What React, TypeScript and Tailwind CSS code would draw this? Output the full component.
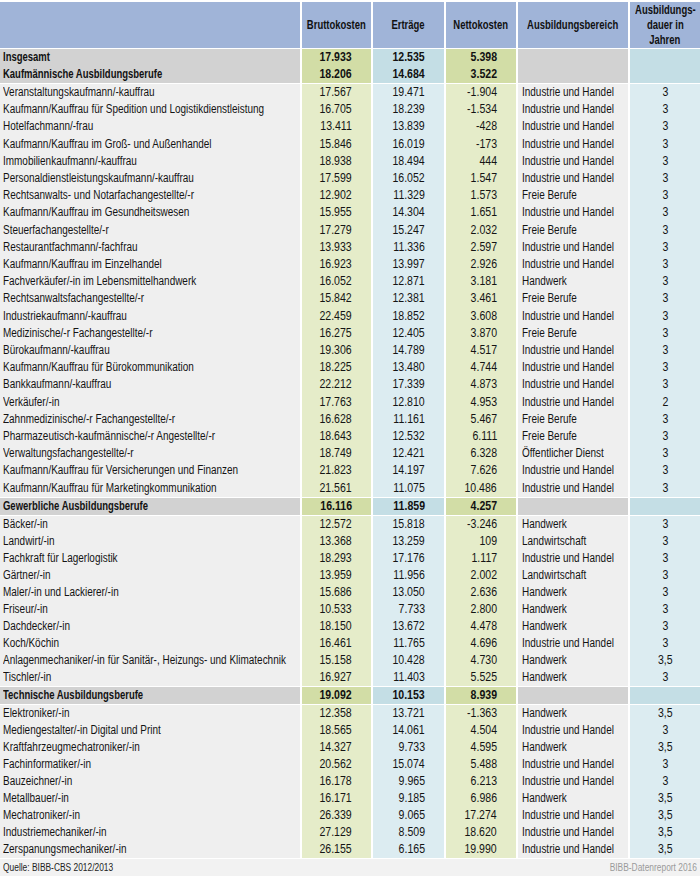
import React from "react";

type Row = { n: string; b: string; e: string; k: string; a?: string; d?: string; s?: boolean };
const I = "Industrie und Handel";
const F = "Freie Berufe";
const H = "Handwerk";
const L = "Landwirtschaft";

const rows: Row[] = [
  { n: "Insgesamt", b: "17.933", e: "12.535", k: "5.398", s: true },
  { n: "Kaufmännische Ausbildungsberufe", b: "18.206", e: "14.684", k: "3.522", s: true },
  { n: "Veranstaltungskaufmann/-kauffrau", b: "17.567", e: "19.471", k: "-1.904", a: I, d: "3" },
  { n: "Kaufmann/Kauffrau für Spedition und Logistikdienstleistung", b: "16.705", e: "18.239", k: "-1.534", a: I, d: "3" },
  { n: "Hotelfachmann/-frau", b: "13.411", e: "13.839", k: "-428", a: I, d: "3" },
  { n: "Kaufmann/Kauffrau im Groß- und Außenhandel", b: "15.846", e: "16.019", k: "-173", a: I, d: "3" },
  { n: "Immobilienkaufmann/-kauffrau", b: "18.938", e: "18.494", k: "444", a: I, d: "3" },
  { n: "Personaldienstleistungskaufmann/-kauffrau", b: "17.599", e: "16.052", k: "1.547", a: I, d: "3" },
  { n: "Rechtsanwalts- und Notarfachangestellte/-r", b: "12.902", e: "11.329", k: "1.573", a: F, d: "3" },
  { n: "Kaufmann/Kauffrau im Gesundheitswesen", b: "15.955", e: "14.304", k: "1.651", a: I, d: "3" },
  { n: "Steuerfachangestellte/-r", b: "17.279", e: "15.247", k: "2.032", a: F, d: "3" },
  { n: "Restaurantfachmann/-fachfrau", b: "13.933", e: "11.336", k: "2.597", a: I, d: "3" },
  { n: "Kaufmann/Kauffrau im Einzelhandel", b: "16.923", e: "13.997", k: "2.926", a: I, d: "3" },
  { n: "Fachverkäufer/-in im Lebensmittelhandwerk", b: "16.052", e: "12.871", k: "3.181", a: H, d: "3" },
  { n: "Rechtsanwaltsfachangestellte/-r", b: "15.842", e: "12.381", k: "3.461", a: F, d: "3" },
  { n: "Industriekaufmann/-kauffrau", b: "22.459", e: "18.852", k: "3.608", a: I, d: "3" },
  { n: "Medizinische/-r Fachangestellte/-r", b: "16.275", e: "12.405", k: "3.870", a: F, d: "3" },
  { n: "Bürokaufmann/-kauffrau", b: "19.306", e: "14.789", k: "4.517", a: I, d: "3" },
  { n: "Kaufmann/Kauffrau für Bürokommunikation", b: "18.225", e: "13.480", k: "4.744", a: I, d: "3" },
  { n: "Bankkaufmann/-kauffrau", b: "22.212", e: "17.339", k: "4.873", a: I, d: "3" },
  { n: "Verkäufer/-in", b: "17.763", e: "12.810", k: "4.953", a: I, d: "2" },
  { n: "Zahnmedizinische/-r Fachangestellte/-r", b: "16.628", e: "11.161", k: "5.467", a: F, d: "3" },
  { n: "Pharmazeutisch-kaufmännische/-r Angestellte/-r", b: "18.643", e: "12.532", k: "6.111", a: F, d: "3" },
  { n: "Verwaltungsfachangestellte/-r", b: "18.749", e: "12.421", k: "6.328", a: "Öffentlicher Dienst", d: "3" },
  { n: "Kaufmann/Kauffrau für Versicherungen und Finanzen", b: "21.823", e: "14.197", k: "7.626", a: I, d: "3" },
  { n: "Kaufmann/Kauffrau für Marketingkommunikation", b: "21.561", e: "11.075", k: "10.486", a: I, d: "3" },
  { n: "Gewerbliche Ausbildungsberufe", b: "16.116", e: "11.859", k: "4.257", s: true },
  { n: "Bäcker/-in", b: "12.572", e: "15.818", k: "-3.246", a: H, d: "3" },
  { n: "Landwirt/-in", b: "13.368", e: "13.259", k: "109", a: L, d: "3" },
  { n: "Fachkraft für Lagerlogistik", b: "18.293", e: "17.176", k: "1.117", a: I, d: "3" },
  { n: "Gärtner/-in", b: "13.959", e: "11.956", k: "2.002", a: L, d: "3" },
  { n: "Maler/-in und Lackierer/-in", b: "15.686", e: "13.050", k: "2.636", a: H, d: "3" },
  { n: "Friseur/-in", b: "10.533", e: "7.733", k: "2.800", a: H, d: "3" },
  { n: "Dachdecker/-in", b: "18.150", e: "13.672", k: "4.478", a: H, d: "3" },
  { n: "Koch/Köchin", b: "16.461", e: "11.765", k: "4.696", a: I, d: "3" },
  { n: "Anlagenmechaniker/-in für Sanitär-, Heizungs- und Klimatechnik", b: "15.158", e: "10.428", k: "4.730", a: H, d: "3,5" },
  { n: "Tischler/-in", b: "16.927", e: "11.403", k: "5.525", a: H, d: "3" },
  { n: "Technische Ausbildungsberufe", b: "19.092", e: "10.153", k: "8.939", s: true },
  { n: "Elektroniker/-in", b: "12.358", e: "13.721", k: "-1.363", a: H, d: "3,5" },
  { n: "Mediengestalter/-in Digital und Print", b: "18.565", e: "14.061", k: "4.504", a: I, d: "3" },
  { n: "Kraftfahrzeugmechatroniker/-in", b: "14.327", e: "9.733", k: "4.595", a: H, d: "3,5" },
  { n: "Fachinformatiker/-in", b: "20.562", e: "15.074", k: "5.488", a: I, d: "3" },
  { n: "Bauzeichner/-in", b: "16.178", e: "9.965", k: "6.213", a: I, d: "3" },
  { n: "Metallbauer/-in", b: "16.171", e: "9.185", k: "6.986", a: H, d: "3,5" },
  { n: "Mechatroniker/-in", b: "26.339", e: "9.065", k: "17.274", a: I, d: "3,5" },
  { n: "Industriemechaniker/-in", b: "27.129", e: "8.509", k: "18.620", a: I, d: "3,5" },
  { n: "Zerspanungsmechaniker/-in", b: "26.155", e: "6.165", k: "19.990", a: I, d: "3,5" },
];

const FONT = { fontFamily: "'Liberation Sans', Arial, sans-serif" };
const COLS = "grid grid-cols-[300px_69px_71px_70px_110px_70px] gap-x-[2px]";

function TL({ children }: { children: React.ReactNode }) {
  return <span className="inline-block whitespace-nowrap origin-left scale-x-[0.83]">{children}</span>;
}
function NR({ children }: { children: React.ReactNode }) {
  return <span className="inline-block whitespace-nowrap origin-right scale-x-[0.88]">{children}</span>;
}
function NC({ children }: { children: React.ReactNode }) {
  return <span className="inline-block whitespace-nowrap origin-center scale-x-[0.88]">{children}</span>;
}
function HB({ children }: { children: React.ReactNode }) {
  return <span className="inline-block whitespace-nowrap origin-center scale-x-[0.79]">{children}</span>;
}

function DataRow({ r, tall }: { r: Row; tall: boolean }) {
  const h = tall ? "h-[17.21px] leading-[17px]" : "h-[17px] leading-[17px]";
  if (r.s) {
    return (
      <div className={`${COLS} h-[17px] leading-[17px] text-[12px] font-bold text-[#111]`}>
        <div className="bg-[#d2d2d2] pl-[3px] overflow-hidden">
          <span className="inline-block whitespace-nowrap origin-left scale-x-[0.79]">{r.n}</span>
        </div>
        <div className="bg-[#d2dda6] text-right pr-[19px]">
          <NR>{r.b}</NR>
        </div>
        <div className="bg-[#c4dee5] text-right pr-[19px]">
          <NR>{r.e}</NR>
        </div>
        <div className="bg-[#d2dda6] text-right pr-[19px]">
          <NR>{r.k}</NR>
        </div>
        <div className="bg-[#d2d2d2]"></div>
        <div className="bg-[#c4dee5]"></div>
      </div>
    );
  }
  return (
    <div className={`${COLS} ${h} text-[12px] text-[#141414]`}>
      <div className="bg-[#efefef] pl-[3px] overflow-hidden">
        <TL>{r.n}</TL>
      </div>
      <div className="bg-[#e5ecc9] text-right pr-[19px]">
        <NR>{r.b}</NR>
      </div>
      <div className="bg-[#dcecf1] text-right pr-[19px]">
        <NR>{r.e}</NR>
      </div>
      <div className="bg-[#e5ecc9] text-right pr-[19px]">
        <NR>{r.k}</NR>
      </div>
      <div className="bg-[#efefef] pl-[4px] overflow-hidden">
        <TL>{r.a}</TL>
      </div>
      <div className="bg-[#dcecf1] text-center">
        <NC>{r.d}</NC>
      </div>
    </div>
  );
}

export default function App() {
  const groups: Row[][] = [];
  let cur: Row[] = [];
  rows.forEach((r, i) => {
    const prev = rows[i - 1];
    if (i > 0 && !!r.s !== !!prev.s) {
      groups.push(cur);
      cur = [];
    }
    cur.push(r);
  });
  groups.push(cur);

  return (
    <div className="w-[700px] h-[877px] bg-white" style={FONT}>
      <div className="pt-[2px]">
        <div className={`${COLS} h-[46px] text-[12px] font-bold text-[#111] leading-[15px]`}>
          <div className="bg-[#a0b4d8]"></div>
          <div className="bg-[#a0b4d8] flex items-center justify-center">
            <HB>Bruttokosten</HB>
          </div>
          <div className="bg-[#a0b4d8] flex items-center justify-center">
            <HB>Erträge</HB>
          </div>
          <div className="bg-[#a0b4d8] flex items-center justify-center">
            <HB>Nettokosten</HB>
          </div>
          <div className="bg-[#a0b4d8] flex items-center justify-center">
            <HB>Ausbildungsbereich</HB>
          </div>
          <div className="bg-[#a0b4d8] flex flex-col items-center justify-center text-center">
            <HB>Ausbildungs-</HB>
            <HB>dauer in</HB>
            <HB>Jahren</HB>
          </div>
        </div>
      </div>
      <div className="flex flex-col gap-y-[1px] pt-[1px]">
        {groups.map((g, gi) => (
          <div key={gi} className="flex flex-col">
            {g.map((r, i) => (
              <DataRow key={i} r={r} tall={gi === 1} />
            ))}
          </div>
        ))}
      </div>
      <div className="mt-[1px] h-[17px] bg-[#f2f2f2] flex items-center justify-between px-[3px] text-[10px] leading-[17px]">
        <span className="inline-block whitespace-nowrap origin-left scale-x-[0.84] text-[#222]">Quelle: BIBB-CBS 2012/2013</span>
        <span className="inline-block whitespace-nowrap origin-right scale-x-[0.84] text-[#9a9a9a]">BIBB-Datenreport 2016</span>
      </div>
    </div>
  );
}
